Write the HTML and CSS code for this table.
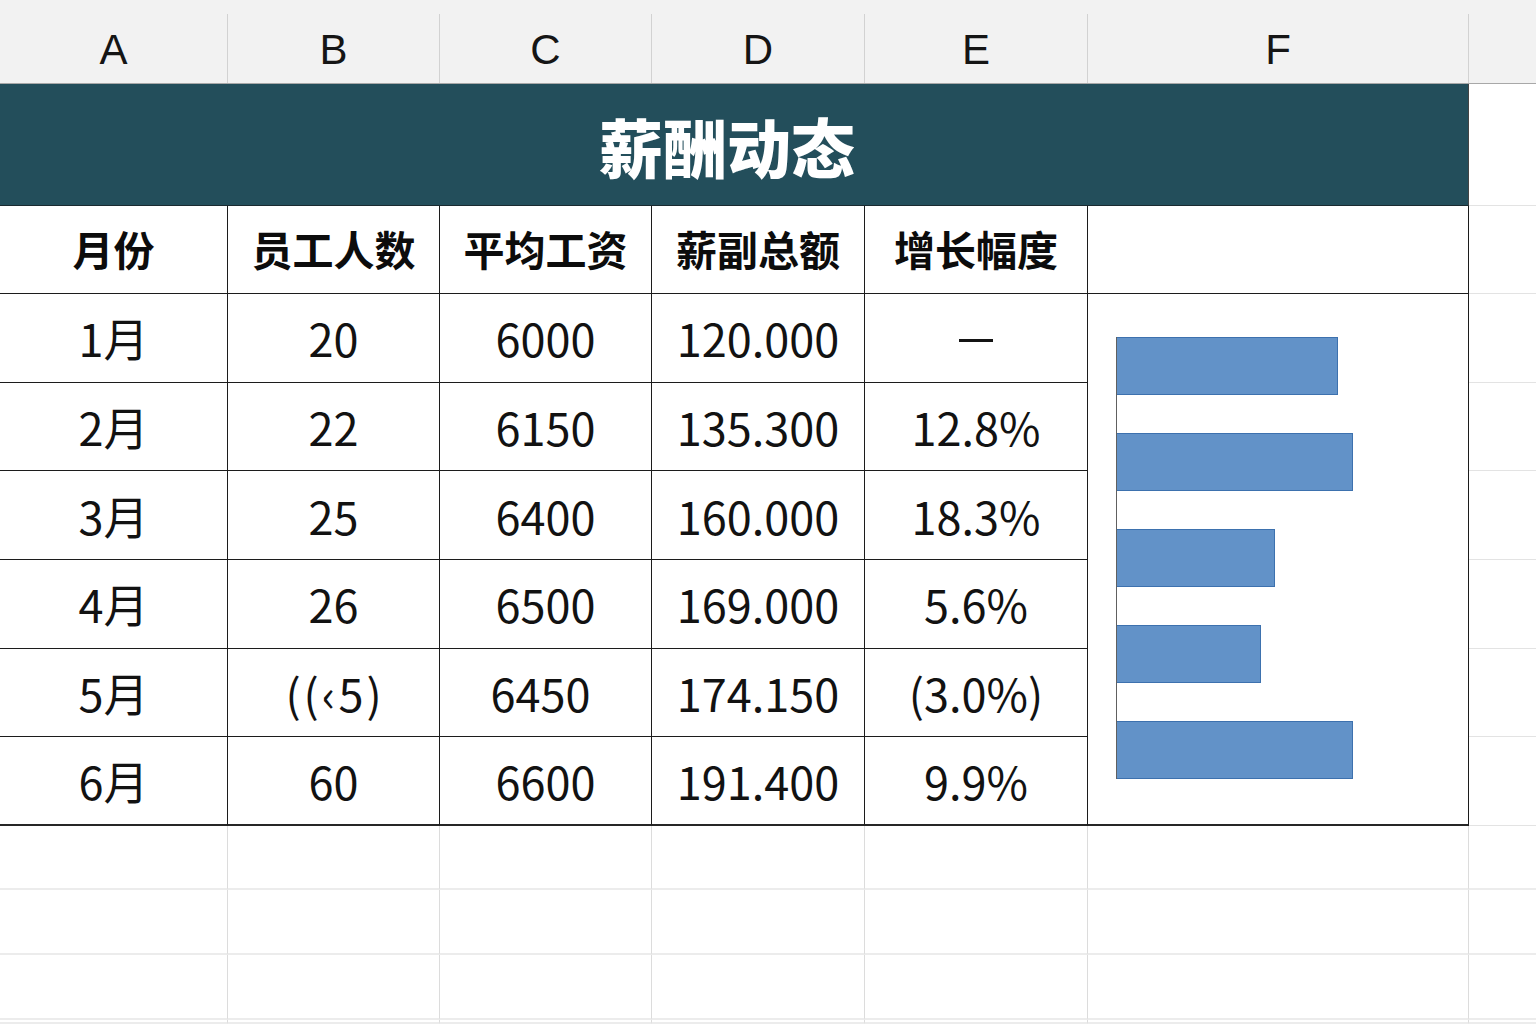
FILE: index.html
```html
<!DOCTYPE html>
<html lang="zh-CN">
<head>
<meta charset="utf-8">
<title>薪酬动态</title>
<link rel="stylesheet" href="styles.css">
</head>
<body>
<div class="sheet">
  <div class="ch"><div class="lbl">A</div></div>
  <div class="ch"><div class="lbl">B</div></div>
  <div class="ch"><div class="lbl">C</div></div>
  <div class="ch"><div class="lbl">D</div></div>
  <div class="ch"><div class="lbl">E</div></div>
  <div class="ch"><div class="lbl">F</div></div>
  <div class="ch ch-last"><div class="lbl"></div></div>

  <div class="title">薪酬动态</div>
  <div class="g"></div>

  <div class="c hd">月份</div>
  <div class="c hd">员工人数</div>
  <div class="c hd">平均工资</div>
  <div class="c hd">薪副总额</div>
  <div class="c hd">增长幅度</div>
  <div class="c hd"></div>
  <div class="g"></div>

  <div class="c">1月</div>
  <div class="c">20</div>
  <div class="c">6000</div>
  <div class="c">120.000</div>
  <div class="c"><span class="dash"></span></div>
  <div class="chart-cell">
    <div class="chart">
      <div class="bar" style="width:221px"></div>
      <div class="bar" style="width:236px"></div>
      <div class="bar" style="width:158px"></div>
      <div class="bar" style="width:144px"></div>
      <div class="bar" style="width:236px"></div>
    </div>
  </div>
  <div class="g"></div>

  <div class="c">2月</div>
  <div class="c">22</div>
  <div class="c">6150</div>
  <div class="c">135.300</div>
  <div class="c">12.8%</div>
  <div class="g"></div>

  <div class="c">3月</div>
  <div class="c">25</div>
  <div class="c">6400</div>
  <div class="c">160.000</div>
  <div class="c">18.3%</div>
  <div class="g"></div>

  <div class="c">4月</div>
  <div class="c">26</div>
  <div class="c">6500</div>
  <div class="c">169.000</div>
  <div class="c">5.6%</div>
  <div class="g"></div>

  <div class="c">5月</div>
  <div class="c odd">((‹5)</div>
  <div class="c left">6450</div>
  <div class="c">174.150</div>
  <div class="c">(3.0%)</div>
  <div class="g"></div>

  <div class="c last">6月</div>
  <div class="c last">60</div>
  <div class="c last">6600</div>
  <div class="c last">191.400</div>
  <div class="c last">9.9%</div>
  <div class="g"></div>

  <div class="e"></div><div class="e"></div><div class="e"></div><div class="e"></div><div class="e"></div><div class="e"></div><div class="e ge"></div>
  <div class="e"></div><div class="e"></div><div class="e"></div><div class="e"></div><div class="e"></div><div class="e"></div><div class="e ge"></div>
  <div class="e"></div><div class="e"></div><div class="e"></div><div class="e"></div><div class="e"></div><div class="e"></div><div class="e ge"></div>
  <div class="e"></div><div class="e"></div><div class="e"></div><div class="e"></div><div class="e"></div><div class="e"></div><div class="e ge"></div>
</div>
</body>
</html>
```

FILE: styles.css
```css
* { box-sizing: border-box; }
html, body {
  margin: 0;
  padding: 0;
  background: #ffffff;
  width: 1536px;
  height: 1024px;
  overflow: hidden;
}
body {
  font-family: "Noto Sans CJK SC", "Noto Sans", sans-serif;
  color: #111111;
}
.sheet {
  display: grid;
  grid-template-columns: 228px 212px 212px 213px 223px 381px 67px;
  grid-template-rows: 84px 122px 88px repeat(6, 88.67px) 64px 65px 65px 4px;
  height: 1024px;
  overflow: hidden;
}
.ch {
  background: #f2f2f2;
  border-bottom: 1px solid #a8a8a8;
  padding-top: 14px;
}
.ch .lbl {
  height: 100%;
  border-right: 1px solid #d2d2d2;
  display: flex;
  align-items: center;
  justify-content: center;
  font-family: "Liberation Sans", Arial, sans-serif;
  font-size: 42px;
  color: #151515;
  padding-top: 2px;
}
.ch-last .lbl { border-right: none; }
.title {
  grid-column: 1 / 7;
  background: #234e5b;
  color: #ffffff;
  font-weight: 900;
  font-size: 64px;
  display: flex;
  align-items: center;
  justify-content: center;
  padding-right: 14px;
  border-bottom: 1px solid #1a2a30;
  border-right: 1px solid #444;
}
.g {
  border-bottom: 1px solid #e3e3e3;
}
.c {
  display: flex;
  align-items: center;
  justify-content: center;
  border-right: 1px solid #1c1c1c;
  border-bottom: 1px solid #1c1c1c;
  font-size: 45px;
  font-weight: 400;
  color: #121212;
}
.c.left { padding-right: 10px; }
.c.odd { letter-spacing: 3px; padding-left: 3px; }
.c.hd {
  font-size: 41px;
  font-weight: 700;
  color: #0c0c0c;
  padding-bottom: 4px;
}
.c.last { border-bottom: 2px solid #262626; }
.dash {
  display: block;
  width: 34px;
  height: 3px;
  background: #141414;
  margin-top: 6px;
}
.chart-cell {
  grid-column: 6;
  grid-row: 4 / span 6;
  border-right: 1px solid #1c1c1c;
  border-bottom: 2px solid #262626;
  padding: 43px 0 0 28px;
}
.chart {
  display: flex;
  flex-direction: column;
  gap: 38px;
  border-left: 1px solid #606060;
}
.bar {
  height: 58px;
  background: #6292c8;
  border: 1px solid #3d71ae;
  border-left: none;
}
.e {
  border-right: 1px solid #dcdcdc;
  border-bottom: 2px solid #ececec;
}
.e.ge { border-right: none; }
```
